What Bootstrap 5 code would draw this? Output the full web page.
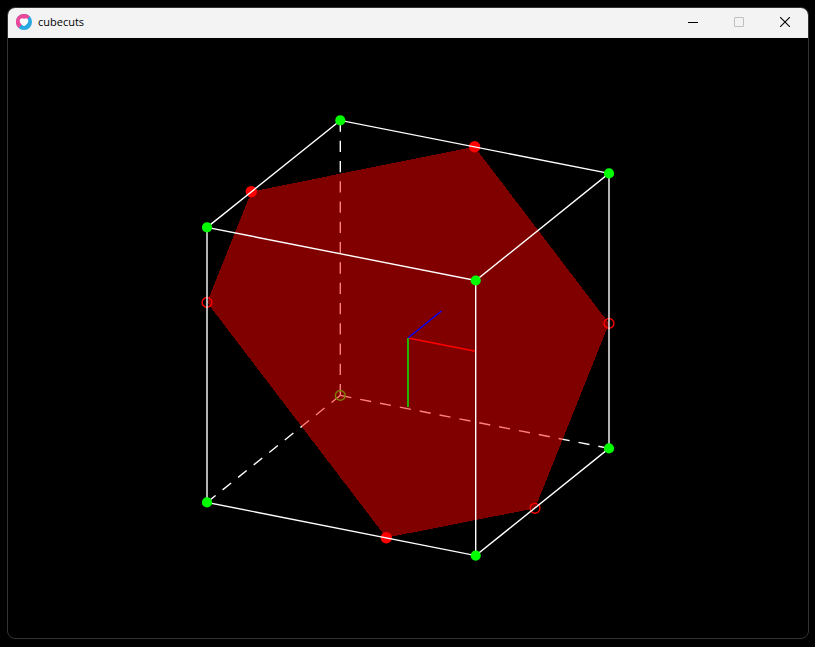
<!DOCTYPE html>
<html lang="en">
<head>
<meta charset="utf-8">
<meta name="viewport" content="width=device-width, initial-scale=1">
<title>cubecuts</title>
<link href="https://cdn.jsdelivr.net/npm/bootstrap@5.3.0/dist/css/bootstrap.min.css" rel="stylesheet">
<style>
  body { background: #000; padding: 7px 6px 8px 7px; font-family: "Open Sans", "Noto Sans", sans-serif; }
  .app-window { border: 1px solid #333; border-radius: 8px; background: #000; }
  .title-bar { background: #f3f3f3; height: 30px; padding: 0 0 2px 8px; gap: 6px; }
  .app-name { font-size: 11px; line-height: 16px; color: #000; margin: 0; font-weight: 400; }
  .caption-btn { width: 46px; height: 28px; }
  .caption-btn:disabled { border: 0; opacity: 1; }
  .scene { min-height: 0; }
</style>
<script src="https://cdn.jsdelivr.net/npm/bootstrap@5.3.0/dist/js/bootstrap.bundle.min.js"></script>
</head>
<body class="vh-100">
<div class="app-window d-flex flex-column h-100 overflow-hidden">
  <header class="title-bar d-flex align-items-center flex-shrink-0">
    <svg width="16" height="16" viewBox="0 0 16 16" aria-hidden="true">
      <circle cx="8" cy="8" r="8" fill="#27a9e1"/>
      <path d="M2.6 13.9A8 8 0 1 1 13.7 2.4Z" fill="#ec4899"/>
      <path d="M8 12.3C5.4 10.7 3.7 9 3.7 6.8C3.7 4.3 6.5 3.5 8 5.1C9.5 3.5 12.3 4.3 12.3 6.8C12.3 9 10.6 10.7 8 12.3Z" fill="#fff"/>
    </svg>
    <h1 class="app-name me-auto">cubecuts</h1>
    <div class="d-flex">
      <button type="button" class="caption-btn btn rounded-0 border-0 p-0 d-flex align-items-center justify-content-center" aria-label="Minimize">
        <svg width="10" height="10" viewBox="0 0 10 10"><path d="M0 5.5H10" stroke="#000"/></svg>
      </button>
      <button type="button" class="caption-btn btn rounded-0 border-0 p-0 d-flex align-items-center justify-content-center" aria-label="Maximize" disabled>
        <svg width="10" height="10" viewBox="0 0 10 10"><rect x=".5" y=".5" width="9" height="9" rx=".5" fill="none" stroke="#c0c0c0"/></svg>
      </button>
      <button type="button" class="caption-btn btn rounded-0 border-0 p-0 d-flex align-items-center justify-content-center" aria-label="Close">
        <svg width="10" height="10" viewBox="0 0 10 10"><path d="M0 0L10 10M10 0L0 10" stroke="#000" stroke-width="1.1"/></svg>
      </button>
    </div>
  </header>
  <main class="scene flex-grow-1">
    <svg class="d-block w-100 h-100" viewBox="0 0 800 600" fill="none" stroke-width="1.4" role="img" aria-label="Cube cut by a plane">
      <!-- hidden edges and hidden corner -->
      <g stroke="#fff">
        <path d="M332.3 82.4V357.4" stroke-dasharray="11.3 8.98"/>
        <path d="M332.3 357.4L601 410.4" stroke-dasharray="11.2 9.03"/>
        <path d="M199 464.4L332.3 357.4" stroke-dasharray="11 8.96"/>
      </g>
      <circle cx="332.3" cy="357.4" r="4.9" stroke="#0f0"/>
      <!-- section -->
      <path d="M243.3 153.6L466.6 108.8L601 285.4L527 470.3L378.3 499.7L199 264.4Z" fill="#f00" fill-opacity=".5" shape-rendering="crispEdges"/>
      <g fill="#f00">
        <circle cx="243.3" cy="153.6" r="5.7"/>
        <circle cx="466.6" cy="108.7" r="5.7"/>
        <circle cx="378.3" cy="499.7" r="5.7"/>
      </g>
      <g stroke="#f00">
        <circle cx="199" cy="264.4" r="4.9"/>
        <circle cx="601" cy="285.4" r="4.9"/>
        <circle cx="527" cy="470.3" r="4.9"/>
      </g>
      <!-- axes -->
      <path d="M400 300L467.5 313.2" stroke="#f00"/>
      <path d="M400 300V369" stroke="#0f0"/>
      <path d="M400 300L433.5 273" stroke="#00f"/>
      <!-- visible edges -->
      <g stroke="#fff">
        <path d="M199 189.4L332.3 82.4L601 135.4L467.7 242.5Z"/>
        <path d="M199 189.4V464.4L467.7 517.6L601 410.4V135.4"/>
        <path d="M467.7 242.5V517.6"/>
      </g>
      <g fill="#0f0">
        <circle cx="332.3" cy="82.4" r="5.1"/>
        <circle cx="601" cy="135.4" r="5.1"/>
        <circle cx="467.7" cy="242.5" r="5.1"/>
        <circle cx="199" cy="189.4" r="5.1"/>
        <circle cx="601" cy="410.4" r="5.1"/>
        <circle cx="467.7" cy="517.6" r="5.1"/>
        <circle cx="199" cy="464.4" r="5.1"/>
      </g>
    </svg>
  </main>
</div>
</body>
</html>
